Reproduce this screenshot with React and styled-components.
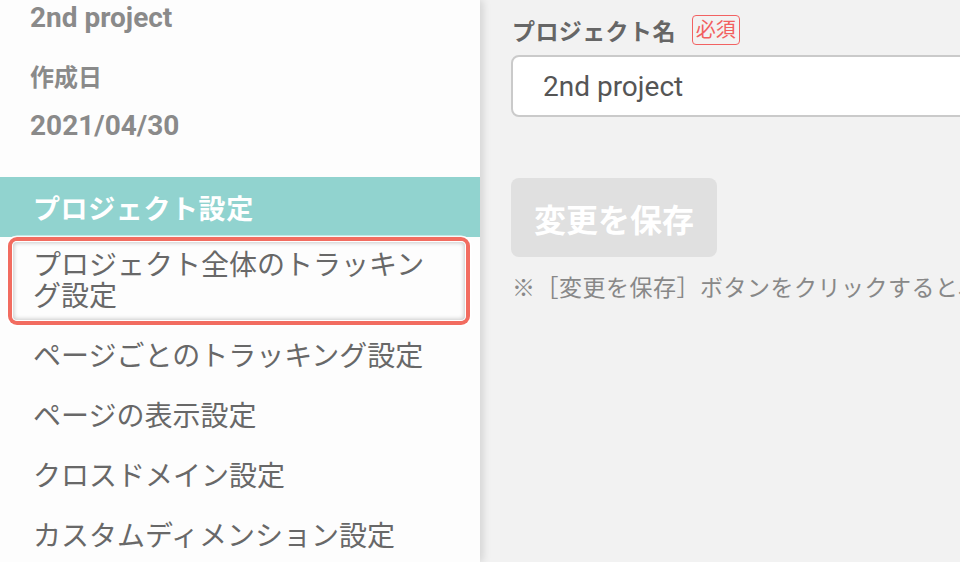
import React from "react";
import styled, { createGlobalStyle } from "styled-components";

const Global = createGlobalStyle`
  html, body { margin: 0; padding: 0; }
  body {
    width: 960px; height: 562px; overflow: hidden;
    font-family: "Roboto", "Noto Sans CJK JP", sans-serif;
    background: #f2f2f2;
  }
  * { box-sizing: border-box; }
`;

const Page = styled.div`
  display: flex;
  width: 960px;
  height: 562px;
  overflow: hidden;
`;

const Sidebar = styled.aside`
  position: relative;
  z-index: 1;
  flex: 0 0 480px;
  background: #fdfdfd;
  box-shadow: 3px 0 8px rgba(0, 0, 0, 0.13);
  display: flex;
  flex-direction: column;
`;

const Info = styled.div`
  padding: 0 0 33px 30px;
  display: flex;
  flex-direction: column;
  color: #8a8a8a;
  font-weight: 700;
`;

const ProjectName = styled.div`
  font-size: 28px;
  line-height: 36px;
`;

const InfoLabel = styled.div`
  font-size: 24px;
  line-height: 32px;
  margin-top: 26px;
`;

const InfoValue = styled.div`
  font-size: 28px;
  line-height: 36px;
  margin-top: 14px;
`;

const Menu = styled.nav`
  display: flex;
  flex-direction: column;
`;

const MenuHeader = styled.div`
  height: 60px;
  background: #91d3cf;
  color: #fff;
  font-weight: 700;
  font-size: 27px;
  padding-left: 33px;
  display: flex;
  align-items: center;
  letter-spacing: 0.6px;
`;

const MenuItem = styled.a`
  display: block;
  color: #686868;
  font-size: 28px;
  line-height: 31px;
  text-decoration: none;
  padding: ${(p) => (p.$active ? "9px 20px 9px 21px" : "14px 40px 15px 33px")};
  margin: ${(p) => (p.$active ? "4px 14px 6px 12px" : "0")};
  border-radius: 5px;
  box-shadow: ${(p) =>
    p.$active
      ? "0 0 0 4px #f26c60, 0 0 0 5.5px rgba(255,255,255,0.9), inset 0 0 0 1px #fff, inset 0 0 4px 2px rgba(0,0,0,0.2)"
      : "none"};
`;

const Main = styled.main`
  flex: 1;
  min-width: 0;
  overflow: hidden;
  padding: 14px 0 0 31px;
  display: flex;
  flex-direction: column;
  align-items: flex-start;
`;

const LabelRow = styled.div`
  display: flex;
  align-items: center;
  gap: 16px;
  height: 31px;
  margin-left: 1px;
`;

const Label = styled.span`
  font-size: 23px;
  font-weight: 700;
  color: #666;
  letter-spacing: 0.4px;
`;

const Required = styled.span`
  font-size: 20px;
  line-height: 28px;
  color: #f25f5f;
  border: 1.5px solid #f26262;
  border-radius: 4px;
  padding: 0 3px;
`;

const Input = styled.div`
  margin-top: 10px;
  width: 700px;
  height: 62px;
  flex: 0 0 62px;
  background: #fff;
  border: 2px solid #cacaca;
  border-radius: 8px;
  padding-left: 30px;
  display: flex;
  align-items: center;
  font-size: 28px;
  color: #555;
`;

const SaveButton = styled.button`
  margin-top: 61px;
  width: 206px;
  height: 79px;
  border: none;
  border-radius: 8px;
  background: #e0e0e0;
  color: #fff;
  font-family: inherit;
  font-weight: 700;
  font-size: 32px;
  padding: 0;
`;

const Note = styled.p`
  margin: 16px 0 0 1px;
  font-size: 23px;
  line-height: 32px;
  color: #888;
  white-space: nowrap;
  letter-spacing: 0.5px;
`;

export default function App() {
  return (
    <>
      <Global />
      <Page>
        <Sidebar>
          <Info>
            <ProjectName>2nd project</ProjectName>
            <InfoLabel>作成日</InfoLabel>
            <InfoValue>2021/04/30</InfoValue>
          </Info>
          <Menu>
            <MenuHeader>プロジェクト設定</MenuHeader>
            <MenuItem $active href="#">プロジェクト全体のトラッキング設定</MenuItem>
            <MenuItem href="#">ページごとのトラッキング設定</MenuItem>
            <MenuItem href="#">ページの表示設定</MenuItem>
            <MenuItem href="#">クロスドメイン設定</MenuItem>
            <MenuItem href="#">カスタムディメンション設定</MenuItem>
          </Menu>
        </Sidebar>
        <Main>
          <LabelRow>
            <Label>プロジェクト名</Label>
            <Required>必須</Required>
          </LabelRow>
          <Input>2nd project</Input>
          <SaveButton disabled>変更を保存</SaveButton>
          <Note>※［変更を保存］ボタンをクリックすると、プロジェクト名が変更されます。</Note>
        </Main>
      </Page>
    </>
  );
}
